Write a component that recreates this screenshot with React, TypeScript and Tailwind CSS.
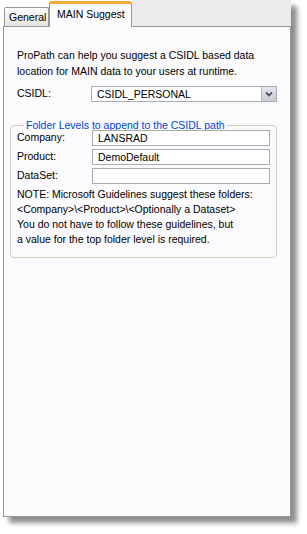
import React from 'react';

const font = "font-['Liberation_Sans',Arial,sans-serif]";

function Field({ label, value }: { label: string; value: string }) {
  return (
    <div className="flex items-center h-[16px]">
      <span className="w-[75px] shrink-0">{label}</span>
      <div className="flex-1 h-[16px] border border-[#a5acb2] bg-white pl-[5px] leading-[14px]">{value}</div>
    </div>
  );
}

export default function App() {
  return (
    <div className={`w-[307px] h-[534px] bg-white text-[10.5px] text-black ${font}`}>
      <div className="ml-[3px] w-[288px] h-[517px] flex flex-col shadow-[6px_6px_5px_rgba(0,0,0,0.45)]">
        {/* tab strip */}
        <div className="flex items-end h-[26px] relative z-10">
          <div className="ml-[1px] w-[45px] h-[19px] border border-b-0 border-[#919b9c] rounded-t-[2px] bg-gradient-to-b from-[#fcfcfb] to-[#e6e6e0] pl-[4px] leading-[18px]">
            General
          </div>
          <div className="w-[83px] h-[26px] -mb-[1px] border-x border-[#919b9c] border-t-[3px] border-t-[#f5a93a] rounded-t-[3px] bg-[#fbfbfd] pl-[7px] leading-[20px]">
            MAIN Suggest
          </div>
          <div className="flex-1 h-[26px] bg-[#ebebeb]" />
        </div>
        {/* panel */}
        <div className="flex-1 border border-[#919b9c] bg-[#fbfbfd] px-[13px] pt-[20px]">
          <p className="leading-[16px]">
            ProPath can help you suggest a CSIDL based data
            <br />
            location for MAIN data to your users at runtime.
          </p>
          <div className="flex items-center mt-[7px] h-[16px]">
            <span className="w-[74px] shrink-0">CSIDL:</span>
            <div className="flex-1 h-[16px] border border-[#a5acb2] bg-white flex items-center">
              <span className="flex-1 pl-[5px] leading-[14px]">CSIDL_PERSONAL</span>
              <div className="w-[15px] h-[14px] bg-gradient-to-b from-[#e4e6ec] to-[#c9ccd6] border-l border-[#b0b4bd] flex items-center justify-center">
                <svg width="8" height="6" viewBox="0 0 8 6">
                  <path d="M1 1.5 L4 4.5 L7 1.5" stroke="#4d5566" strokeWidth="1.8" fill="none" />
                </svg>
              </div>
            </div>
          </div>
          <fieldset className="mt-[18px] -ml-[7px] w-[267px] border border-[#d0d0bf] rounded-[4px] px-[6px] pb-[10px]">
            <legend className="ml-[7px] px-[2px] text-[#0046d5] leading-[10px]">Folder Levels to append to the CSIDL path</legend>
            <div className="flex flex-col gap-[3px]">
              <Field label="Company:" value="LANSRAD" />
              <Field label="Product:" value="DemoDefault" />
              <Field label="DataSet:" value="" />
            </div>
            <p className="mt-[3px] leading-[15px]">
              NOTE: Microsoft Guidelines suggest these folders:
              <br />
              {'<Company>\\<Product>\\<Optionally a Dataset>'}
              <br />
              You do not have to follow these guidelines, but
              <br />
              a value for the top folder level is required.
            </p>
          </fieldset>
        </div>
      </div>
    </div>
  );
}
